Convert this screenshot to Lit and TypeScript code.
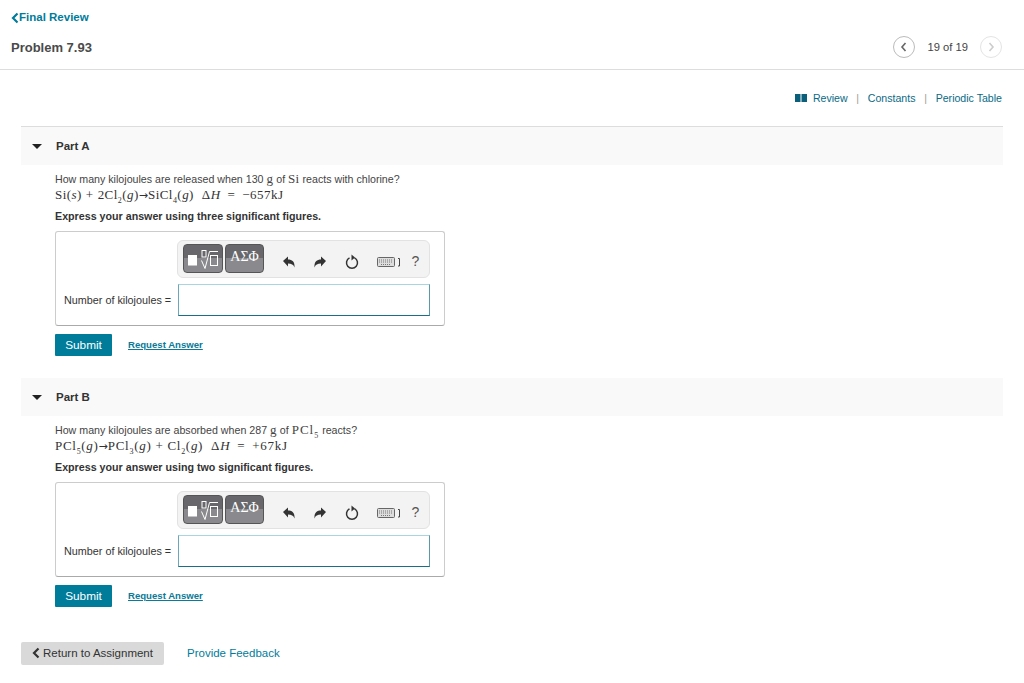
import { LitElement, html, css, svg } from "lit";
import { customElement } from "lit/decorators.js";

const chev = (d: string, c: string, w = 1.6) => html`<svg width="8" height="12" viewBox="0 0 8 12"><path d="${d}" fill="none" stroke="${c}" stroke-width="${w}"/></svg>`;

interface PartData {
  name: string; prompt: unknown; eq: unknown; express: string;
}

const parts: PartData[] = [
  {
    name: "Part A",
    prompt: html`How many kilojoules are released when 130 <span class="m">g</span> of <span class="m">Si</span> reacts with chlorine?`,
    eq: html`Si(<i>s</i>)<span class="op">+</span>2Cl<sub>2</sub>(<i>g</i>)<span class="arr">→</span>SiCl<sub>4</sub>(<i>g</i>)<span class="gap"></span>Δ<i>H</i><span class="eqop">=</span>−657kJ`,
    express: "Express your answer using three significant figures.",
  },
  {
    name: "Part B",
    prompt: html`How many kilojoules are absorbed when 287 <span class="m">g</span> of <span class="m w">PCl<sub>5</sub></span> reacts?`,
    eq: html`PCl<sub>5</sub>(<i>g</i>)<span class="arr">→</span>PCl<sub>3</sub>(<i>g</i>)<span class="op">+</span>Cl<sub>2</sub>(<i>g</i>)<span class="gap"></span>Δ<i>H</i><span class="eqop">=</span>+67kJ`,
    express: "Express your answer using two significant figures.",
  },
];

@customElement("app-root")
export class AppRoot extends LitElement {
  static styles = css`
    :host { display: block; width: 1024px; height: 683px; overflow: hidden; background: #fff; font-family: "Liberation Sans", Arial, sans-serif; color: #333; font-size: 11px; }
    a { color: #007c9b; text-decoration: none; }
    .top { height: 69px; border-bottom: 1px solid #ddd; padding: 0 22px 0 11px; position: relative; box-sizing: content-box; }
    .back { display: flex; align-items: center; gap: 0; padding-top: 11px; height: 13px; font-weight: 700; font-size: 11.5px; line-height: 13px; }
    .titlerow { display: flex; align-items: center; justify-content: space-between; margin-top: 11px; height: 24px; }
    .title { font-size: 13px; font-weight: 700; color: #4a4a4a; }
    .pager { display: flex; align-items: center; font-size: 11.2px; color: #444; }
    .circle { width: 22px; height: 22px; border-radius: 50%; border: 1px solid #bbb; box-sizing: border-box; display: flex; align-items: center; justify-content: center; }
    .circle.off { border-color: #e4e4e4; }
    .count { margin: 0 12px 0 13px; }
    .links { display: flex; justify-content: flex-end; align-items: center; height: 14px; margin: 21px 22px 0 0; font-size: 10.6px; }
    .links a { color: #0a6a85; }
    .links .sep { color: #999; margin: 0 8.7px; }
    .links svg { margin-right: 6px; }
    .parts { margin: 21px 21px 0 21px; border-top: 1px solid #ddd; }
    .bar { height: 38px; background: #f9f9f9; display: flex; align-items: center; font-weight: 700; font-size: 11.5px; color: #333; }
    .tri { width: 0; height: 0; border-left: 5px solid transparent; border-right: 5px solid transparent; border-top: 5px solid #222; margin: 0 14px 0 11px; }
    .body { padding: 8px 0 0 34px; }
    .part.b { margin-top: 22px; }
    .prompt { font-size: 10.67px; height: 13px; line-height: 13px; color: #444; white-space: nowrap; }
    .m { font-family: "Liberation Serif", serif; font-size: 13px; line-height: 0; letter-spacing: .3px; }
    .m.w { letter-spacing: 1px; }
    sub { font-size: 8px; line-height: 0; }
    .eq { font-family: "Liberation Serif", serif; font-size: 13px; height: 15px; line-height: 15px; letter-spacing: .45px; color: #333; margin-top: 1px; white-space: nowrap; }
    .part.b .eq { letter-spacing: .7px; }
    .op { margin: 0 4px; }
    .eqop { margin: 0 7px; }
    .arr { font-family: "DejaVu Sans", sans-serif; font-size: 11px; line-height: 0; letter-spacing: 0; }
    .gap { display: inline-block; width: 8px; }
    .exp { font-weight: 700; font-size: 10.7px; line-height: 13px; margin-top: 8px; color: #333; }
    .box { margin-top: 8px; width: 390px; height: 95px; box-sizing: border-box; border: 1px solid #ccc; border-bottom-color: #aaa; border-radius: 3px; padding: 8px 14px 0 8px; position: relative; }
    .tools { margin-left: 113px; width: 253px; height: 38px; box-sizing: border-box; background: #f3f3f3; border: 1px solid #e2e2e2; border-radius: 6px; display: flex; align-items: center; padding-left: 5px; }
    .tb { height: 29px; margin-bottom: 2px; border-radius: 4px; border: 1px solid #555; box-sizing: border-box; background: linear-gradient(#68686c 0 48%, #8a8a8e 48% 100%); color: #fff; display: flex; align-items: center; justify-content: center; }
    .tb.a { width: 40px; margin-right: 2px; }
    .tb.b2 { width: 40px; font-family: "Liberation Serif", serif; font-size: 14px; padding-bottom: 3px; }
    .ic { display: flex; align-items: center; justify-content: center; padding-top: 5px; }
    .ic.undo { width: 40px; margin-left: 5px; }
    .ic.redo { width: 24px; }
    .ic.reload { width: 42px; }
    .ic.keys { width: 30px; padding-left: 3px; box-sizing: border-box; }
    .ic.help { width: 28px; font-size: 14px; color: #555; padding-top: 4px; }
    .ansrow { display: flex; align-items: center; margin-top: 6px; }
    .lbl { width: 114px; font-size: 10.8px; color: #333; }
    .input { width: 252px; height: 32px; box-sizing: border-box; border: 1px solid #a8d5e0; border-bottom-color: #1a6f88; border-right-color: #5c98aa; border-left-color: #6aa7b8; }
    .actions { display: flex; align-items: center; margin-top: 8px; }
    .submit { width: 57px; height: 22px; background: #007c9b; color: #fff; font-size: 11.8px; display: flex; align-items: center; justify-content: center; border-radius: 1px; }
    .req { margin-left: 16px; padding-bottom: 2px; font-weight: 700; font-size: 9.6px; text-decoration: underline; color: #0a7a98; }
    .foot { display: flex; align-items: center; margin: 35px 0 0 21px; font-size: 11.5px; }
    .ret { width: 143px; height: 23px; box-sizing: border-box; padding-bottom: 1px; background: #d9d9d9; border-radius: 2px; display: flex; align-items: center; justify-content: center; gap: 3px; color: #333; }
    .fb { margin-left: 23px; padding-bottom: 2px; }
  `;

  private toolbar() {
    return html`<div class="tools">
      <div class="tb a">
        <svg width="38" height="27" viewBox="0 0 38 27">
          <rect x="4" y="10" width="9" height="10.500" fill="#fff"/>
          <g fill="none" stroke="#fff" stroke-width="1">
            <rect x="18" y="5.500" width="4" height="6.500"/>
            <path d="M17.500 15.500l3.500 8L25.500 6.500H34"/>
            <rect x="26.500" y="10.500" width="7" height="10"/>
          </g>
        </svg>
      </div>
      <div class="tb b2">ΑΣΦ</div>
      <div class="ic undo">${svg`<svg width="14" height="14" viewBox="0 0 14 14"><path d="M1 6l5-4.500v3c4 0 7 2 6.500 8-1-3-3-4-6.500-4v3z" fill="#333"/></svg>`}</div>
      <div class="ic redo">${svg`<svg width="14" height="14" viewBox="0 0 14 14"><path d="M13 6L8 1.500v3c-4 0-7 2-6.500 8 1-3 3-4 6.500-4v3z" fill="#333"/></svg>`}</div>
      <div class="ic reload">${svg`<svg width="16" height="16" viewBox="0 0 16 16"><path d="M5.500 3.800a5.500 5.500 0 1 0 5 0" fill="none" stroke="#333" stroke-width="1.500"/><path d="M7.500 .5v6l3.500-3z" fill="#333"/></svg>`}</div>
      <div class="ic keys">${svg`<svg width="24" height="12" viewBox="0 0 24 12"><rect x=".5" y="1.500" width="17" height="9" rx="1" fill="#ddd" stroke="#666"/><path d="M2 4h14M2 6h14M4 8.500h10" stroke="#777" stroke-dasharray="1 1"/><path d="M21 2.500h1.500v7.500H21" fill="none" stroke="#444"/></svg>`}</div>
      <div class="ic help">?</div>
    </div>`;
  }

  private part(p: PartData, i: number) {
    return html`<div class="part ${i ? "b" : ""}">
      <div class="bar"><span class="tri"></span>${p.name}</div>
      <div class="body">
        <div class="prompt">${p.prompt}</div>
        <div class="eq">${p.eq}</div>
        <div class="exp">${p.express}</div>
        <div class="box">
          ${this.toolbar()}
          <div class="ansrow"><div class="lbl">Number of kilojoules =</div><div class="input"></div></div>
        </div>
        <div class="actions"><a class="submit">Submit</a><a class="req">Request Answer</a></div>
      </div>
    </div>`;
  }

  render() {
    return html`
      <div class="top">
        <a class="back">${chev("M6.500 1.500L2 6l4.500 4.500", "#007c9b", 2.2)}Final Review</a>
        <div class="titlerow">
          <div class="title">Problem 7.93</div>
          <div class="pager">
            <div class="circle">${chev("M5.500 2L2 6l3.500 4", "#666")}</div>
            <span class="count">19 of 19</span>
            <div class="circle off">${chev("M2.500 2L6 6l-3.500 4", "#ccc")}</div>
          </div>
        </div>
      </div>
      <div class="links">
        <svg width="12" height="8" viewBox="0 0 12 8"><path d="M0 0h5.500v8H0zM6.500 0H12v8H6.500z" fill="#0a5f7a"/></svg>
        <a>Review</a><span class="sep">|</span><a>Constants</a><span class="sep">|</span><a>Periodic Table</a>
      </div>
      <div class="parts">${parts.map((p, i) => this.part(p, i))}</div>
      <div class="foot">
        <div class="ret">${chev("M6.500 1.500L2 6l4.500 4.500", "#333", 2.2)}Return to Assignment</div>
        <a class="fb">Provide Feedback</a>
      </div>
    `;
  }
}
